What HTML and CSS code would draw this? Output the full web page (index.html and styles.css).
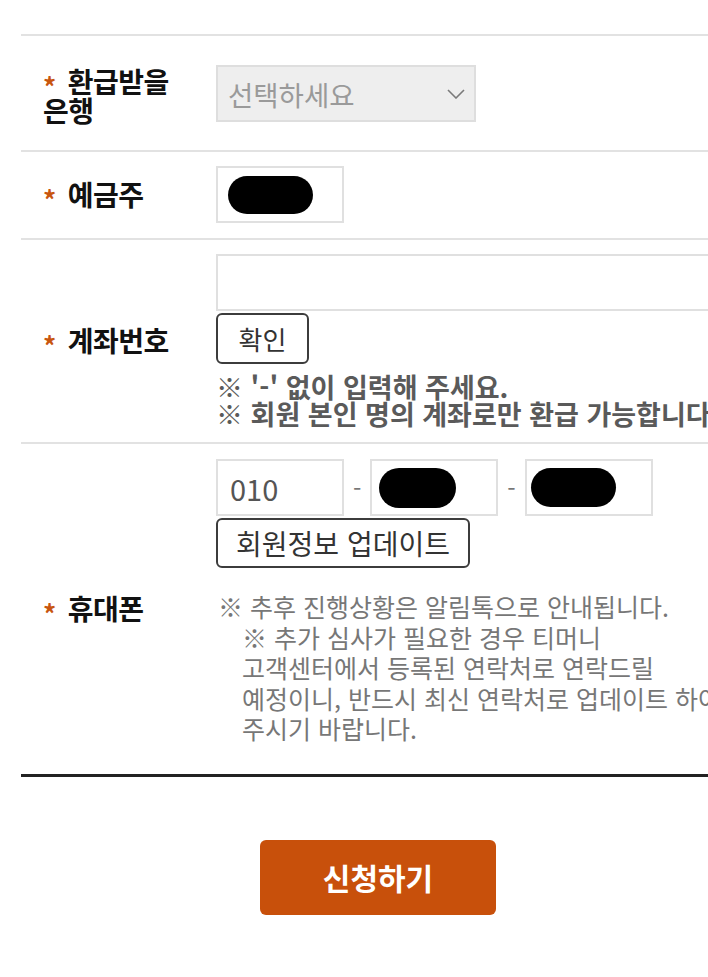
FILE: index.html
```html
<!DOCTYPE html>
<html lang="ko">
<head>
<meta charset="utf-8">
<title>환급 신청</title>
<link rel="stylesheet" href="styles.css">
</head>
<body>
<div class="page">
  <div class="form">
    <div class="row row-bank">
      <div class="label"><span class="req">*</span>환급받을 은행</div>
      <div class="field">
        <div class="select">
          <span class="select-text">선택하세요</span>
          <svg class="chev" width="18" height="10" viewBox="0 0 18 10"><polyline points="1,1 9,9 17,1" fill="none" stroke="#7a7a7a" stroke-width="1.6"/></svg>
        </div>
      </div>
    </div>
    <div class="row row-name">
      <div class="label"><span class="req">*</span>예금주</div>
      <div class="field">
        <div class="input short"><span class="redact r1"></span></div>
      </div>
    </div>
    <div class="row row-account">
      <div class="label"><span class="req">*</span>계좌번호</div>
      <div class="field">
        <div class="input wide"></div>
        <button class="btn btn-confirm">확인</button>
        <div class="note-strong">※ '-' 없이 입력해 주세요.<br>※ 회원 본인 명의 계좌로만 환급 가능합니다.</div>
      </div>
    </div>
    <div class="row row-phone">
      <div class="label"><span class="req">*</span>휴대폰</div>
      <div class="field">
        <div class="phone">
          <div class="input short"><span class="val">010</span></div>
          <span class="dash">-</span>
          <div class="input short"><span class="redact r2"></span></div>
          <span class="dash">-</span>
          <div class="input short"><span class="redact r3"></span></div>
        </div>
        <button class="btn btn-update">회원정보 업데이트</button>
        <div class="note">
          <div class="note-first">※ 추후 진행상황은 알림톡으로 안내됩니다.</div>
          <div class="note-rest">※ 추가 심사가 필요한 경우 티머니<br>고객센터에서 등록된 연락처로 연락드릴<br>예정이니, 반드시 최신 연락처로 업데이트 하여<br>주시기 바랍니다.</div>
        </div>
      </div>
    </div>
  </div>
  <div class="actions">
    <button class="submit">신청하기</button>
  </div>
</div>
</body>
</html>
```

FILE: styles.css
```css
html, body {
  margin: 0;
  padding: 0;
  background: #ffffff;
  overflow: hidden;
}

body {
  font-family: "Noto Sans CJK KR", "Noto Sans", sans-serif;
  color: #111;
}

.page {
  width: 714px;
  padding: 34px 0 0 21px;
}

.form {
  border-top: 2px solid #e2e2e2;
  border-bottom: 3px solid #222;
}

.row {
  display: flex;
  align-items: center;
  border-bottom: 2px solid #e2e2e2;
}

.row:last-child {
  border-bottom: none;
}

.row-bank { padding: 29px 0 28px; }
.row-name { padding: 14px 0 15px; }
.row-account { padding: 14px 0 15px; }
.row-phone { padding: 15px 0 15px; }

.label {
  box-sizing: border-box;
  width: 195px;
  flex: none;
  padding: 4px 16px 0 22px;
  font-size: 28px;
  font-weight: 700;
  line-height: 24px;
  color: #111;
  word-break: keep-all;
  letter-spacing: -0.5px;
}

.req {
  color: #c8560f;
  font-size: 26px;
  vertical-align: -4px;
  margin-right: 12px;
}

.field {
  flex: 1;
  min-width: 0;
  display: flex;
  flex-direction: column;
  align-items: flex-start;
}

.select {
  box-sizing: border-box;
  width: 260px;
  height: 57px;
  background: #eeeeee;
  border: 2px solid #dedede;
  display: flex;
  align-items: center;
  justify-content: space-between;
  padding: 0 9px 0 10px;
}

.select-text {
  font-size: 27.5px;
  color: #9a9a9a;
}

.input {
  box-sizing: border-box;
  height: 57px;
  border: 2px solid #e0e0e0;
  background: #fff;
  display: flex;
  align-items: center;
  padding-left: 10px;
}

.input.short { width: 128px; }
.input.wide { width: 520px; }

.val {
  font-size: 29px;
  color: #555;
  margin-left: 2px;
}

.redact {
  display: block;
  background: #000;
  border-radius: 20px;
}

.r1 { width: 85px; height: 38px; }
.r2 { width: 77px; height: 40px; margin-left: -3px; }
.r3 { width: 85px; height: 39px; margin-left: -6px; }

.phone {
  display: flex;
  align-items: center;
  gap: 9px;
}

.dash {
  font-size: 24px;
  color: #777;
}

.btn {
  box-sizing: border-box;
  margin-top: 2px;
  background: #fff;
  border: 2px solid #3c3c3c;
  border-radius: 6px;
  font-family: "Noto Sans CJK KR", "Noto Sans", sans-serif;
  font-size: 26px;
  color: #333;
  padding: 0;
  cursor: pointer;
}

.btn-confirm {
  width: 93px;
  height: 51px;
}

.btn-update {
  width: 254px;
  height: 50px;
  font-size: 28px;
}

.note-strong {
  margin-top: 9px;
  font-size: 27px;
  font-weight: 700;
  line-height: 27px;
  color: #5a5a5a;
  white-space: nowrap;
}

.note {
  margin: 23px 0 15px;
  font-size: 25px;
  line-height: 30.5px;
  color: #777;
  white-space: nowrap;
}

.note-first {
  margin-left: 2px;
}

.note-rest {
  padding-left: 26px;
}

.actions {
  display: flex;
  justify-content: center;
  padding-top: 63px;
}

.submit {
  width: 236px;
  height: 75px;
  background: #c8500b;
  border: none;
  border-radius: 6px;
  color: #fff;
  font-family: "Noto Sans CJK KR", "Noto Sans", sans-serif;
  font-size: 30px;
  font-weight: 700;
  cursor: pointer;
}
```
